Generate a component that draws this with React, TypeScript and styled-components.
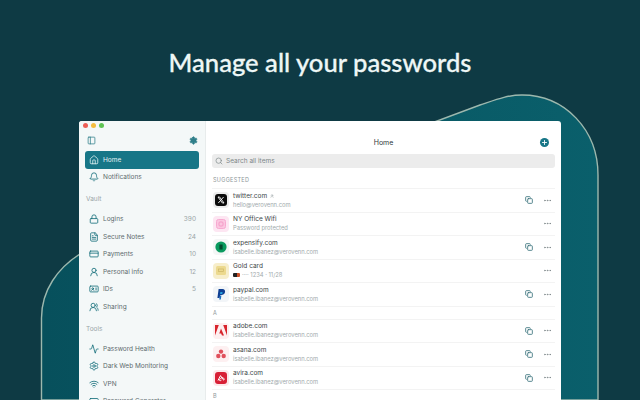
import React, { ReactNode } from "react";
import styled, { createGlobalStyle } from "styled-components";
import {
  Activity,
  Bell,
  Copy,
  CreditCard,
  FileText,
  Home,
  IdCard,
  Lock,
  MoreHorizontal,
  PanelLeft,
  Plus,
  RectangleHorizontal,
  Search,
  Settings,
  UserRound,
  UsersRound,
  Wifi,
} from "lucide-react";

const GlobalStyle = createGlobalStyle`
  html, body {
    margin: 0;
    background: #0e3a44;
  }
  * {
    box-sizing: border-box;
  }
`;

const Page = styled.div`
  position: relative;
  width: 640px;
  height: 400px;
  overflow: hidden;
  background: #0e3a44;
  font-family: Inter, "Liberation Sans", sans-serif;
`;

const Backdrop = styled.svg`
  position: absolute;
  inset: 0;
`;

const Title = styled.h1`
  position: relative;
  margin: 0;
  height: 121px;
  padding-top: 45px;
  text-align: center;
  color: #eef7f6;
  font-family: Lato, sans-serif;
  font-size: 25.6px;
  line-height: 34px;
  font-weight: 500;
  -webkit-text-stroke: 0.3px #eef7f6;
`;

const Window = styled.div`
  position: relative;
  display: flex;
  width: 482px;
  height: 300px;
  margin-left: 79px;
  border-radius: 3px 3px 0 0;
  overflow: hidden;
  background: #fff;
`;

const Sidebar = styled.div`
  width: 127px;
  padding: 0 6px;
  background: #f4f8f8;
  border-right: 1px solid #e8ecec;
`;

const Lights = styled.div`
  display: flex;
  gap: 3px;
  height: 10px;
  padding-top: 2px;
  margin-left: -2px;
`;

const Light = styled.span<{ $color: string }>`
  width: 5px;
  height: 5px;
  border-radius: 50%;
  background: ${(p) => p.$color};
`;

const SideTools = styled.div`
  display: flex;
  justify-content: space-between;
  align-items: center;
  height: 20px;
  padding: 0 1px 2px 2px;
  color: #2f7f8a;
`;

const NavRow = styled.div<{ $active?: boolean }>`
  display: flex;
  align-items: center;
  height: 17.6px;
  padding: 0 3px 0 4px;
  border-radius: 3px;
  color: ${(p) => (p.$active ? "#e4f3f4" : "#5d6b6e")};
  background: ${(p) => (p.$active ? "#177687" : "transparent")};
  font-size: 6.5px;

  svg {
    width: 10px;
    height: 10px;
    margin-right: 4px;
    color: ${(p) => (p.$active ? "#dff1f2" : "#17707c")};
  }
`;

const Count = styled.span`
  margin-left: auto;
  color: #9aa5a7;
`;

const SideLabel = styled.div<{ $gap: number }>`
  height: 19px;
  margin-top: ${(p) => p.$gap}px;
  padding-left: 1px;
  color: #9aa5a7;
  font-size: 6.5px;
  line-height: 17px;
`;

const Main = styled.div`
  flex: 1;
  padding: 0 6px;
`;

const Header = styled.div`
  position: relative;
  display: flex;
  justify-content: center;
  align-items: center;
  height: 33px;
  padding-top: 9px;
  color: #30393b;
  font-size: 7px;
`;

const AddButton = styled.span`
  position: absolute;
  right: 6px;
  top: 17px;
  display: flex;
  justify-content: center;
  align-items: center;
  width: 9px;
  height: 9px;
  border-radius: 50%;
  background: #177687;
  color: #fff;
`;

const SearchBar = styled.div`
  display: flex;
  align-items: center;
  gap: 3px;
  height: 14px;
  padding-left: 3px;
  border-radius: 3px;
  background: #ececec;
  color: #7c8688;
  font-size: 6.5px;
`;

const GroupLabel = styled.div<{ $height: number; $bottom: number }>`
  display: flex;
  align-items: flex-end;
  height: ${(p) => p.$height}px;
  padding: 0 1px ${(p) => p.$bottom}px;
  border-bottom: 1px solid #f3f3f3;
  color: #8d9698;
  font-size: 5.5px;
  letter-spacing: 0.3px;
  line-height: 9px;
`;

const Row = styled.div`
  display: flex;
  align-items: center;
  height: 23.5px;
  padding-right: 3px;
  border-bottom: 1px solid #f3f3f3;
`;

const Tile = styled.div<{ $bg: string }>`
  display: flex;
  justify-content: center;
  align-items: center;
  flex: none;
  width: 16px;
  height: 16px;
  margin: 0 4px 0 1px;
  border-radius: 4px;
  background: ${(p) => p.$bg};
`;

const Texts = styled.div`
  flex: 1;
`;

const ItemTitle = styled.div`
  display: flex;
  align-items: center;
  gap: 3px;
  color: #3d4648;
  font-size: 6.5px;
  line-height: 9px;
`;

const ItemSub = styled.div`
  display: flex;
  align-items: center;
  gap: 2px;
  color: #a1aaac;
  font-size: 5.8px;
  line-height: 8px;
`;

const RowAction = styled.span<{ $hidden?: boolean }>`
  display: flex;
  width: 8px;
  margin-right: 10px;
  color: #3f7680;
  visibility: ${(p) => (p.$hidden ? "hidden" : "visible")};
`;

const More = styled.span`
  display: flex;
  color: #7c8688;
`;

const CardChip = styled.span`
  width: 7px;
  height: 4px;
  border-radius: 1px;
  background: linear-gradient(90deg, #222 50%, #c8502a 50%);
`;

const XLogo = () => (
  <svg width="12" height="12" viewBox="0 0 12 12">
    <rect width="12" height="12" rx="3" fill="#0b0b0b" />
    <path d="M3 3h1.6l4.4 6H7.4zM8.6 3 3.3 9" stroke="#fff" strokeWidth="0.9" fill="none" />
  </svg>
);

const WifiLogo = () => (
  <svg width="10" height="10" viewBox="0 0 10 10">
    <rect x="0.5" y="0.5" width="9" height="9" rx="2" fill="#fbc6e0" stroke="#f7a9d0" />
    <rect x="3" y="3" width="4" height="4" rx="1" fill="none" stroke="#f49ac6" />
  </svg>
);

const ExpensifyLogo = () => (
  <svg width="12" height="12" viewBox="0 0 12 12">
    <circle cx="6" cy="6" r="5.6" fill="#0b9a5f" />
    <rect x="4.4" y="3.5" width="3.2" height="5" fill="#06492f" />
  </svg>
);

const GoldLogo = () => (
  <svg width="10" height="9" viewBox="0 0 10 9">
    <rect width="10" height="9" rx="1.5" fill="#ecd98e" />
    <rect x="2.5" y="3" width="5" height="2.5" fill="none" stroke="#cdb566" strokeWidth="0.7" />
  </svg>
);

const PaypalLogo = () => (
  <svg width="9" height="11" viewBox="0 0 9 11">
    <path d="M1.6 0h3.8C7.6 0 8.4 1.4 8 3.2 7.6 5 6.2 6 4.4 6H3.2L2.6 9H.4z" fill="#0f3f93" />
    <path d="M3.4 3h2.2l-.4 2H3z" fill="#27a3e0" />
    <path d="M3 6.4h1.4l-.6 4H2.2z" fill="#1b6fc0" />
  </svg>
);

const AdobeLogo = () => (
  <svg width="12" height="11" viewBox="0 0 12 11">
    <path d="M0 0h3.8L0 10.5zM12 0H8.2L12 10.5zM6 3.6 9 10.5H7L6.1 8.4H4.3z" fill="#d8242c" />
  </svg>
);

const AsanaLogo = () => (
  <svg width="10" height="10" viewBox="0 0 10 10" fill="#e0505c">
    <circle cx="5" cy="2.6" r="2.2" />
    <circle cx="2.3" cy="7" r="2.2" />
    <circle cx="7.7" cy="7" r="2.2" />
  </svg>
);

const AviraLogo = () => (
  <svg width="12" height="12" viewBox="0 0 12 12">
    <rect width="12" height="12" rx="3" fill="#d81f35" />
    <path d="M3 8.5 5.5 3.6 8 7.5c.8 1 1.6.2 1-.8C8 5 6 5.4 4.6 7.6 4 8.8 5.4 9 6.4 8.2" fill="none" stroke="#fff" strokeWidth="1" />
  </svg>
);

type Item = {
  title: string;
  sub: ReactNode;
  logo: ReactNode;
  bg: string;
  noCopy?: boolean;
  titleMark?: boolean;
};

const isabelle = "isabelle.ibanez@verovenn.com";

const suggested: Item[] = [
  { title: "twitter.com", sub: "hello@verovenn.com", logo: <XLogo />, bg: "#ececec", titleMark: true },
  { title: "NY Office Wifi", sub: "Password protected", logo: <WifiLogo />, bg: "#fde6f2", noCopy: true },
  { title: "expensify.com", sub: isabelle, logo: <ExpensifyLogo />, bg: "#f4f6f6" },
  {
    title: "Gold card",
    sub: (
      <>
        <CardChip /> ···· 1234 · 11/28
      </>
    ),
    logo: <GoldLogo />,
    bg: "#f7eecb",
    noCopy: true,
  },
  { title: "paypal.com", sub: isabelle, logo: <PaypalLogo />, bg: "#f2f5f8" },
];

const letterA: Item[] = [
  { title: "adobe.com", sub: isabelle, logo: <AdobeLogo />, bg: "#fdeff0" },
  { title: "asana.com", sub: isabelle, logo: <AsanaLogo />, bg: "#fdf0f1" },
  { title: "avira.com", sub: isabelle, logo: <AviraLogo />, bg: "#fde8ea" },
];

const vault = [
  { label: "Logins", count: 390, icon: <Lock /> },
  { label: "Secure Notes", count: 24, icon: <FileText /> },
  { label: "Payments", count: 10, icon: <CreditCard /> },
  { label: "Personal info", count: 12, icon: <UserRound /> },
  { label: "IDs", count: 5, icon: <IdCard /> },
  { label: "Sharing", icon: <UsersRound /> },
];

const tools = [
  { label: "Password Health", icon: <Activity /> },
  { label: "Dark Web Monitoring", icon: <Settings /> },
  { label: "VPN", icon: <Wifi /> },
  { label: "Password Generator", icon: <RectangleHorizontal /> },
];

function ItemRow({ item }: { item: Item }) {
  return (
    <Row>
      <Tile $bg={item.bg}>{item.logo}</Tile>
      <Texts>
        <ItemTitle>
          {item.title}
          {item.titleMark && <UserRound size={4} color="#8d9698" />}
        </ItemTitle>
        <ItemSub>{item.sub}</ItemSub>
      </Texts>
      <RowAction $hidden={item.noCopy}>
        <Copy size={8} strokeWidth={2.6} />
      </RowAction>
      <More>
        <MoreHorizontal size={9} />
      </More>
    </Row>
  );
}

export default function App() {
  return (
    <Page>
      <GlobalStyle />
      <Backdrop width="640" height="400" viewBox="0 0 640 400">
        <defs>
          <linearGradient id="shape" x1="0" y1="0" x2="1" y2="0">
            <stop offset="0" stopColor="#07505c" />
            <stop offset="1" stopColor="#0a5f6b" />
          </linearGradient>
        </defs>
        <path
          d="M41.5 400V318C41.5 290 58 268 80 254L480 105C495 100 507 95 522 95C565 95 598 130 598 175V400Z"
          fill="url(#shape)"
          stroke="#9db8ae"
          strokeWidth="1.4"
        />
      </Backdrop>
      <Title>Manage all your passwords</Title>
      <Window>
        <Sidebar>
          <Lights>
            <Light $color="#ee5f57" />
            <Light $color="#f5bd3f" />
            <Light $color="#5fc454" />
          </Lights>
          <SideTools>
            <PanelLeft size={9} />
            <Settings size={9} fill="#2f7f8a" />
          </SideTools>
          <NavRow $active>
            <Home />
            Home
          </NavRow>
          <NavRow>
            <Bell />
            Notifications
          </NavRow>
          <SideLabel $gap={5}>Vault</SideLabel>
          {vault.map((v) => (
            <NavRow key={v.label}>
              {v.icon}
              {v.label}
              {v.count && <Count>{v.count}</Count>}
            </NavRow>
          ))}
          <SideLabel $gap={5}>Tools</SideLabel>
          {tools.map((t) => (
            <NavRow key={t.label}>
              {t.icon}
              {t.label}
            </NavRow>
          ))}
        </Sidebar>
        <Main>
          <Header>
            Home
            <AddButton>
              <Plus size={7} strokeWidth={3} />
            </AddButton>
          </Header>
          <SearchBar>
            <Search size={8} />
            Search all items
          </SearchBar>
          <GroupLabel $height={21} $bottom={3}>
            SUGGESTED
          </GroupLabel>
          {suggested.map((item) => (
            <ItemRow key={item.title} item={item} />
          ))}
          <GroupLabel $height={13} $bottom={1}>
            A
          </GroupLabel>
          {letterA.map((item) => (
            <ItemRow key={item.title} item={item} />
          ))}
          <GroupLabel $height={13} $bottom={1}>
            B
          </GroupLabel>
        </Main>
      </Window>
    </Page>
  );
}
